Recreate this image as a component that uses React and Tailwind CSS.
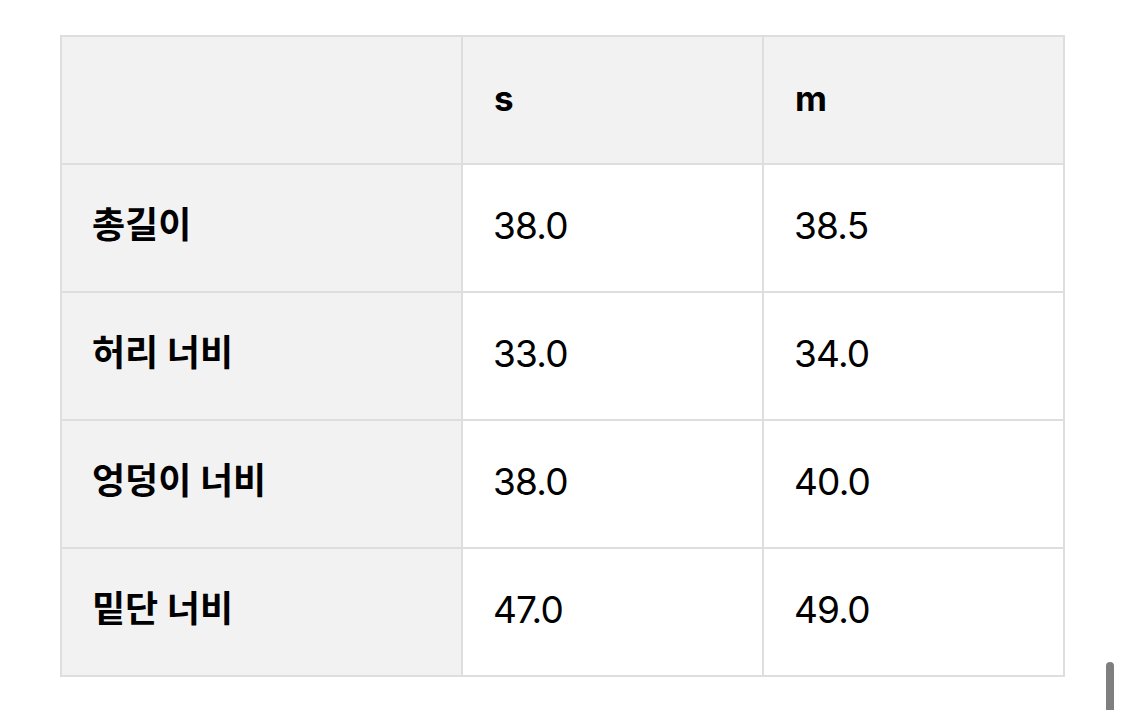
import React from 'react';

const rows = [
  { label: '총길이', s: '38.0', m: '38.5' },
  { label: '허리 너비', s: '33.0', m: '34.0' },
  { label: '엉덩이 너비', s: '38.0', m: '40.0' },
  { label: '밑단 너비', s: '47.0', m: '49.0' },
];

const font = { fontFamily: 'Inter, "Noto Sans CJK KR", sans-serif' };

const App = () => {
  return (
    <div className="relative w-[1125px] h-[710px] bg-white overflow-hidden" style={font}>
      <div className="pl-[60px] pt-[35px]">
        <table className="w-[1005px] border-collapse border-2 border-[#e4e4e4] text-black">
          <thead>
            <tr className="h-[128px] bg-[#f2f2f2]">
              <th className="w-[401px] border-2 border-[#dedede]"></th>
              <th className="w-[301px] border-2 border-[#dedede] text-left pl-[31px] pb-[4px] text-[35px] font-bold">s</th>
              <th className="border-2 border-[#dedede] text-left pl-[31px] pb-[4px] text-[35px] font-bold">m</th>
            </tr>
          </thead>
          <tbody>
            {rows.map((r) => (
              <tr key={r.label} className="h-[128px]">
                <td className="bg-[#f2f2f2] border-2 border-[#dedede] pl-[30px] pb-[6px] text-[36px] font-bold leading-none">{r.label}</td>
                <td className="border-2 border-[#dedede] pl-[30px] pb-[4px] text-[37px] font-normal tracking-[-0.8px]">{r.s}</td>
                <td className="border-2 border-[#dedede] pl-[30px] pb-[4px] text-[37px] font-normal tracking-[-0.8px]">{r.m}</td>
              </tr>
            ))}
          </tbody>
        </table>
      </div>
      {/* scroll indicator */}
      <div className="absolute left-[1106px] top-[662px] w-[8px] h-[60px] rounded-full bg-[#7f7f7f]"></div>
    </div>
  );
};

export default App;
